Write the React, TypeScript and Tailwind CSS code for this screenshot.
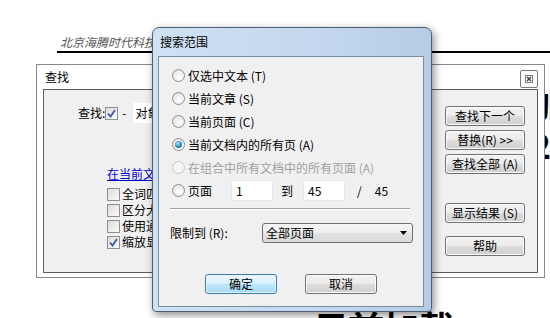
import React from "react";
import clsx from "clsx";

const font = "font-['Noto_Sans_CJK_SC','Noto_Sans',sans-serif]";

const WinButton = ({
  children,
  className,
  focused,
}: {
  children: React.ReactNode;
  className?: string;
  focused?: boolean;
}) => (
  <div
    className={clsx(
      "flex items-center justify-center h-[20px] rounded-[3px] border text-[12px] leading-none text-black",
      focused
        ? "border-[#3c7fb1] bg-[linear-gradient(#eaf6fd,#d9f0fc_50%,#bee6fd_50%,#a7d9f5)] shadow-[inset_0_0_0_1px_#e5f4fc]"
        : "border-[#707070] bg-[linear-gradient(#f2f2f2,#ebebeb_50%,#dddddd_50%,#cfcfcf)] shadow-[inset_0_0_0_1px_#fcfcfc]",
      className
    )}
  >
    {children}
  </div>
);

const Radio = ({ checked, disabled }: { checked?: boolean; disabled?: boolean }) => (
  <span
    className={clsx(
      "w-[13px] h-[13px] rounded-full border flex items-center justify-center shrink-0",
      disabled
        ? "border-[#c9c9c9] bg-[#f4f4f4]"
        : "border-[#8e8f8f] bg-[radial-gradient(circle_at_60%_65%,#ffffff,#dcdcdc)]"
    )}
  >
    {checked && (
      <span className="w-[7px] h-[7px] rounded-full bg-[radial-gradient(circle_at_40%_35%,#a6e8ff,#2a8ab8_55%,#0d4a6e)]" />
    )}
  </span>
);

const Check = ({ checked }: { checked?: boolean }) => (
  <span className="w-[13px] h-[13px] border border-[#8e8f8f] bg-[linear-gradient(135deg,#dcdcdc,#fbfbfb)] flex items-center justify-center shrink-0">
    {checked && (
      <svg width="9" height="9" viewBox="0 0 9 9">
        <path d="M1 4.5 L3.5 7.5 L8 1" fill="none" stroke="#3b5a9e" strokeWidth="1.8" />
      </svg>
    )}
  </span>
);

const RadioRow = ({
  label,
  checked,
  disabled,
}: {
  label: string;
  checked?: boolean;
  disabled?: boolean;
}) => (
  <div className="h-[23px] flex items-center gap-[3px]">
    <Radio checked={checked} disabled={disabled} />
    <span className={clsx("text-[12px] leading-none", disabled ? "text-[#a0a0a0]" : "text-black")}>
      {label}
    </span>
  </div>
);

const App = () => {
  return (
    <div className={clsx("relative w-[550px] h-[318px] bg-white overflow-hidden", font)}>
      {/* page content behind the panels */}
      <div className="absolute left-[57px] top-[33px] right-0 h-[20px] border-b-2 border-black text-[12px] leading-[18px]">
        <span className="pl-[3px] italic text-[#555]">北京海腾时代科技有限公司</span>
      </div>
      <div className="absolute left-[531px] top-[82px] text-[34px] font-bold leading-[42px] text-black">
        <div>加</div>
        <div>2</div>
      </div>
      <div className="absolute left-[313px] top-[309px] text-[36px] font-bold leading-none text-black tracking-[-1px]">
        日前加载：
      </div>

      {/* Find panel */}
      <div className="absolute left-[36px] top-[64px] w-[509px] h-[214px] border border-[#828790] bg-white flex flex-col">
        <div className="h-[24px] shrink-0 flex items-center justify-between pl-[8px] pr-[6px]">
          <span className="text-[12px] leading-none">查找</span>
          <div className="w-[18px] h-[18px] mt-[4px] border border-[#7a7a7a] rounded-[2px] flex items-center justify-center bg-[#fbfbfb]">
            <svg width="8" height="8" viewBox="0 0 8 8">
              <rect x="0.5" y="0.5" width="7" height="7" fill="none" stroke="#777" strokeWidth="1" />
              <path d="M2 2 L6 6 M6 2 L2 6" stroke="#333" strokeWidth="1.2" />
            </svg>
          </div>
        </div>
        <div className="flex-1 mx-[6px] mb-[4px] border border-[#5d5d5d] bg-[#f0f0f0] flex">
          <div className="flex-1 flex flex-col pt-[13px]">
            <div className="h-[20px] flex items-center pl-[34px] text-[12px] leading-none">
              <span>查找:</span>
              <Check checked />
              <span className="ml-[4px]">-</span>
              <div className="ml-[6px] h-[20px] w-[200px] bg-white flex items-center pl-[3px]">对象</div>
            </div>
            <div className="mt-[43px] ml-[63px] h-[16px] flex items-center text-[12px] leading-none text-[#0000cc] underline">
              在当前文档中查找
            </div>
            <div className="mt-[4px] ml-[63px] flex flex-col text-[12px] leading-none">
              {[
                ["全词匹配", false],
                ["区分大小写", false],
                ["使用通配符", false],
                ["缩放显示结果", true],
              ].map(([label, checked]) => (
                <div key={label as string} className="h-[16px] flex items-center gap-[2px]">
                  <Check checked={checked as boolean} />
                  <span>{label as string}</span>
                </div>
              ))}
            </div>
          </div>
          <div className="w-[80px] mr-[12px] pt-[16px] flex flex-col">
            <WinButton>查找下一个</WinButton>
            <WinButton className="mt-[4px]">替换(R) &gt;&gt;</WinButton>
            <WinButton className="mt-[4px]">查找全部 (A)</WinButton>
            <WinButton className="mt-[29px]">显示结果 (S)</WinButton>
            <WinButton className="mt-[13px]">帮助</WinButton>
          </div>
        </div>
      </div>

      {/* Search range dialog */}
      <div className="absolute left-[152px] top-[27px] w-[280px] h-[285px] rounded-t-[7px] rounded-b-[4px] border border-[#4e5f72] bg-[linear-gradient(90deg,#cfe1f3,#c3d8ee_60%,#b5cce4)] shadow-[2px_3px_8px_rgba(0,0,0,0.45)] flex flex-col">
        <div className="h-[28px] shrink-0 flex items-center pl-[7px] text-[12px] leading-none text-black">
          搜索范围
        </div>
        <div className="flex-1 ml-[5px] mr-[7px] mb-[4px] border border-[#7a8ea4] bg-[#f0f0f0] flex flex-col pt-[7px] text-[12px] leading-none">
          <div className="pl-[13px] flex flex-col">
            <RadioRow label="仅选中文本 (T)" />
            <RadioRow label="当前文章 (S)" />
            <RadioRow label="当前页面 (C)" />
            <RadioRow label="当前文档内的所有页 (A)" checked />
            <RadioRow label="在组合中所有文档中的所有页面 (A)" disabled />
            <div className="h-[23px] flex items-center">
              <Radio />
              <span className="ml-[3px] w-[43px]">页面</span>
              <div className="h-[21px] w-[42px] bg-white border border-[#e3e9ef] flex items-center pl-[4px]">1</div>
              <span className="ml-[8px] w-[22px]">到</span>
              <div className="h-[21px] w-[42px] bg-white border border-[#e3e9ef] flex items-center pl-[4px]">45</div>
              <span className="ml-[12px]">/</span>
              <span className="ml-[13px]">45</span>
            </div>
          </div>
          <div className="mt-[6px] ml-[11px] w-[240px] border-t border-[#a0a0a0] border-b border-b-white" />
          <div className="mt-[13px] ml-[11px] h-[20px] flex items-center">
            <span className="w-[92px]">限制到 (R):</span>
            <div className="h-[20px] w-[151px] rounded-[3px] border border-[#707070] bg-[linear-gradient(#f6f6f6,#ededed_50%,#e2e2e2_50%,#dbdbdb)] flex items-center pl-[3px] pr-[5px]">
              <span className="flex-1">全部页面</span>
              <svg width="7" height="4" viewBox="0 0 7 4">
                <path d="M0 0 H7 L3.5 4 Z" fill="#000" />
              </svg>
            </div>
          </div>
          <div className="mt-[31px] ml-[46px] flex gap-[28px]">
            <WinButton focused className="w-[72px]">确定</WinButton>
            <WinButton className="w-[72px]">取消</WinButton>
          </div>
        </div>
      </div>
    </div>
  );
};

export default App;
